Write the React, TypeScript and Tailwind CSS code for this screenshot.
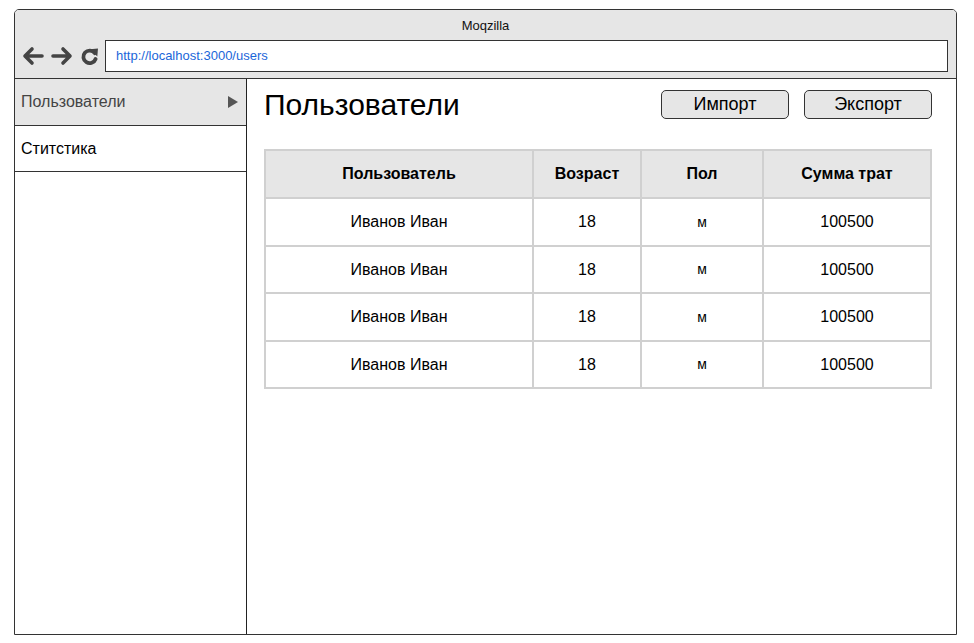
import React from "react";

const rows = [0, 1, 2, 3];
const rowHeights = ["h-[48px]", "h-[47px]", "h-[48px]", "h-[47px]"];

function Back() {
  return (
    <svg width="22" height="20" viewBox="0 0 22 20">
      <path d="M20 10 H4 M10 3 L3 10 L10 17" fill="none" stroke="#444" strokeWidth="3.6" strokeLinecap="round" strokeLinejoin="round" />
    </svg>
  );
}
function Fwd() {
  return (
    <svg width="22" height="20" viewBox="0 0 22 20">
      <path d="M2 10 H18 M12 3 L19 10 L12 17" fill="none" stroke="#444" strokeWidth="3.6" strokeLinecap="round" strokeLinejoin="round" />
    </svg>
  );
}
function Reload() {
  return (
    <svg width="19" height="19" viewBox="0 0 19 19">
      <path d="M14.8 6.2 A6.3 6.3 0 1 0 15.6 12" fill="none" stroke="#444" strokeWidth="3.8" strokeLinecap="round" />
      <path d="M10 2.2 L18 1.5 L17.3 9.5 Z" fill="#444" />
    </svg>
  );
}

export default function App() {
  return (
    <div className="w-[974px] h-[643px] bg-white pl-[14px] pt-[9px]" style={{ fontFamily: '"Liberation Sans", Arial, sans-serif' }}>
      <div className="w-[943px] h-[626px] border border-[#333] rounded-t-[5px] flex flex-col overflow-hidden">
        <div className="h-[69px] bg-[#e6e6e6] border-b border-[#333] flex flex-col">
          <div className="h-[30px] flex items-center justify-center text-[13px] text-[#111] pt-[1px]">Moqzilla</div>
          <div className="flex items-center pl-[7px] pr-[8px]">
            <div className="flex items-center gap-[7px] w-[83px]">
              <Back />
              <Fwd />
              <Reload />
            </div>
            <div className="flex-1 h-[32px] bg-white border border-[#333] flex items-center pl-[10px] text-[13px] text-[#1a66d9]">
              http://localhost:3000/users
            </div>
          </div>
        </div>
        <div className="flex flex-1">
          <div className="w-[232px] shrink-0 border-r border-[#222] flex flex-col">
            <div className="h-[47px] bg-[#e6e6e6] border-b-[1.5px] border-[#333] flex items-center justify-between pl-[6px] pr-[8px] text-[16px] text-[#444]">
              <span>Пользователи</span>
              <svg width="10" height="12" viewBox="0 0 10 12"><path d="M0 0 L10 6 L0 12 Z" fill="#555" /></svg>
            </div>
            <div className="h-[46px] border-b-[1.5px] border-[#333] flex items-center pl-[6px] text-[16px] text-black">Ститстика</div>
          </div>
          <div className="flex-1 pl-[17px] pr-[26px] pt-[11px]">
            <div className="flex items-center justify-between h-[29px]">
              <div className="text-[30px] leading-[29px] text-black">Пользователи</div>
              <div className="flex gap-[15px]">
                <button className="w-[128px] h-[29px] rounded-[5px] border border-[#333] bg-[#e6e6e6] text-[18px] text-black">Импорт</button>
                <button className="w-[128px] h-[29px] rounded-[5px] border border-[#333] bg-[#e6e6e6] text-[18px] text-black">Экспорт</button>
              </div>
            </div>
            <table className="mt-[30px] w-full border-collapse table-fixed text-[16px] text-black">
              <colgroup>
                <col className="w-[268px]" />
                <col className="w-[108px]" />
                <col className="w-[122px]" />
                <col className="w-[168px]" />
              </colgroup>
              <thead>
                <tr className="h-[48px] bg-[#e6e6e6]">
                  <th className="border-2 border-[#d0d0d0] font-bold">Пользователь</th>
                  <th className="border-2 border-[#d0d0d0] font-bold">Возраст</th>
                  <th className="border-2 border-[#d0d0d0] font-bold">Пол</th>
                  <th className="border-2 border-[#d0d0d0] font-bold">Сумма трат</th>
                </tr>
              </thead>
              <tbody>
                {rows.map((i) => (
                  <tr key={i} className={rowHeights[i]}>
                    <td className="border-2 border-[#d0d0d0] text-center">Иванов Иван</td>
                    <td className="border-2 border-[#d0d0d0] text-center">18</td>
                    <td className="border-2 border-[#d0d0d0] text-center text-[14px]">м</td>
                    <td className="border-2 border-[#d0d0d0] text-center">100500</td>
                  </tr>
                ))}
              </tbody>
            </table>
          </div>
        </div>
      </div>
    </div>
  );
}
